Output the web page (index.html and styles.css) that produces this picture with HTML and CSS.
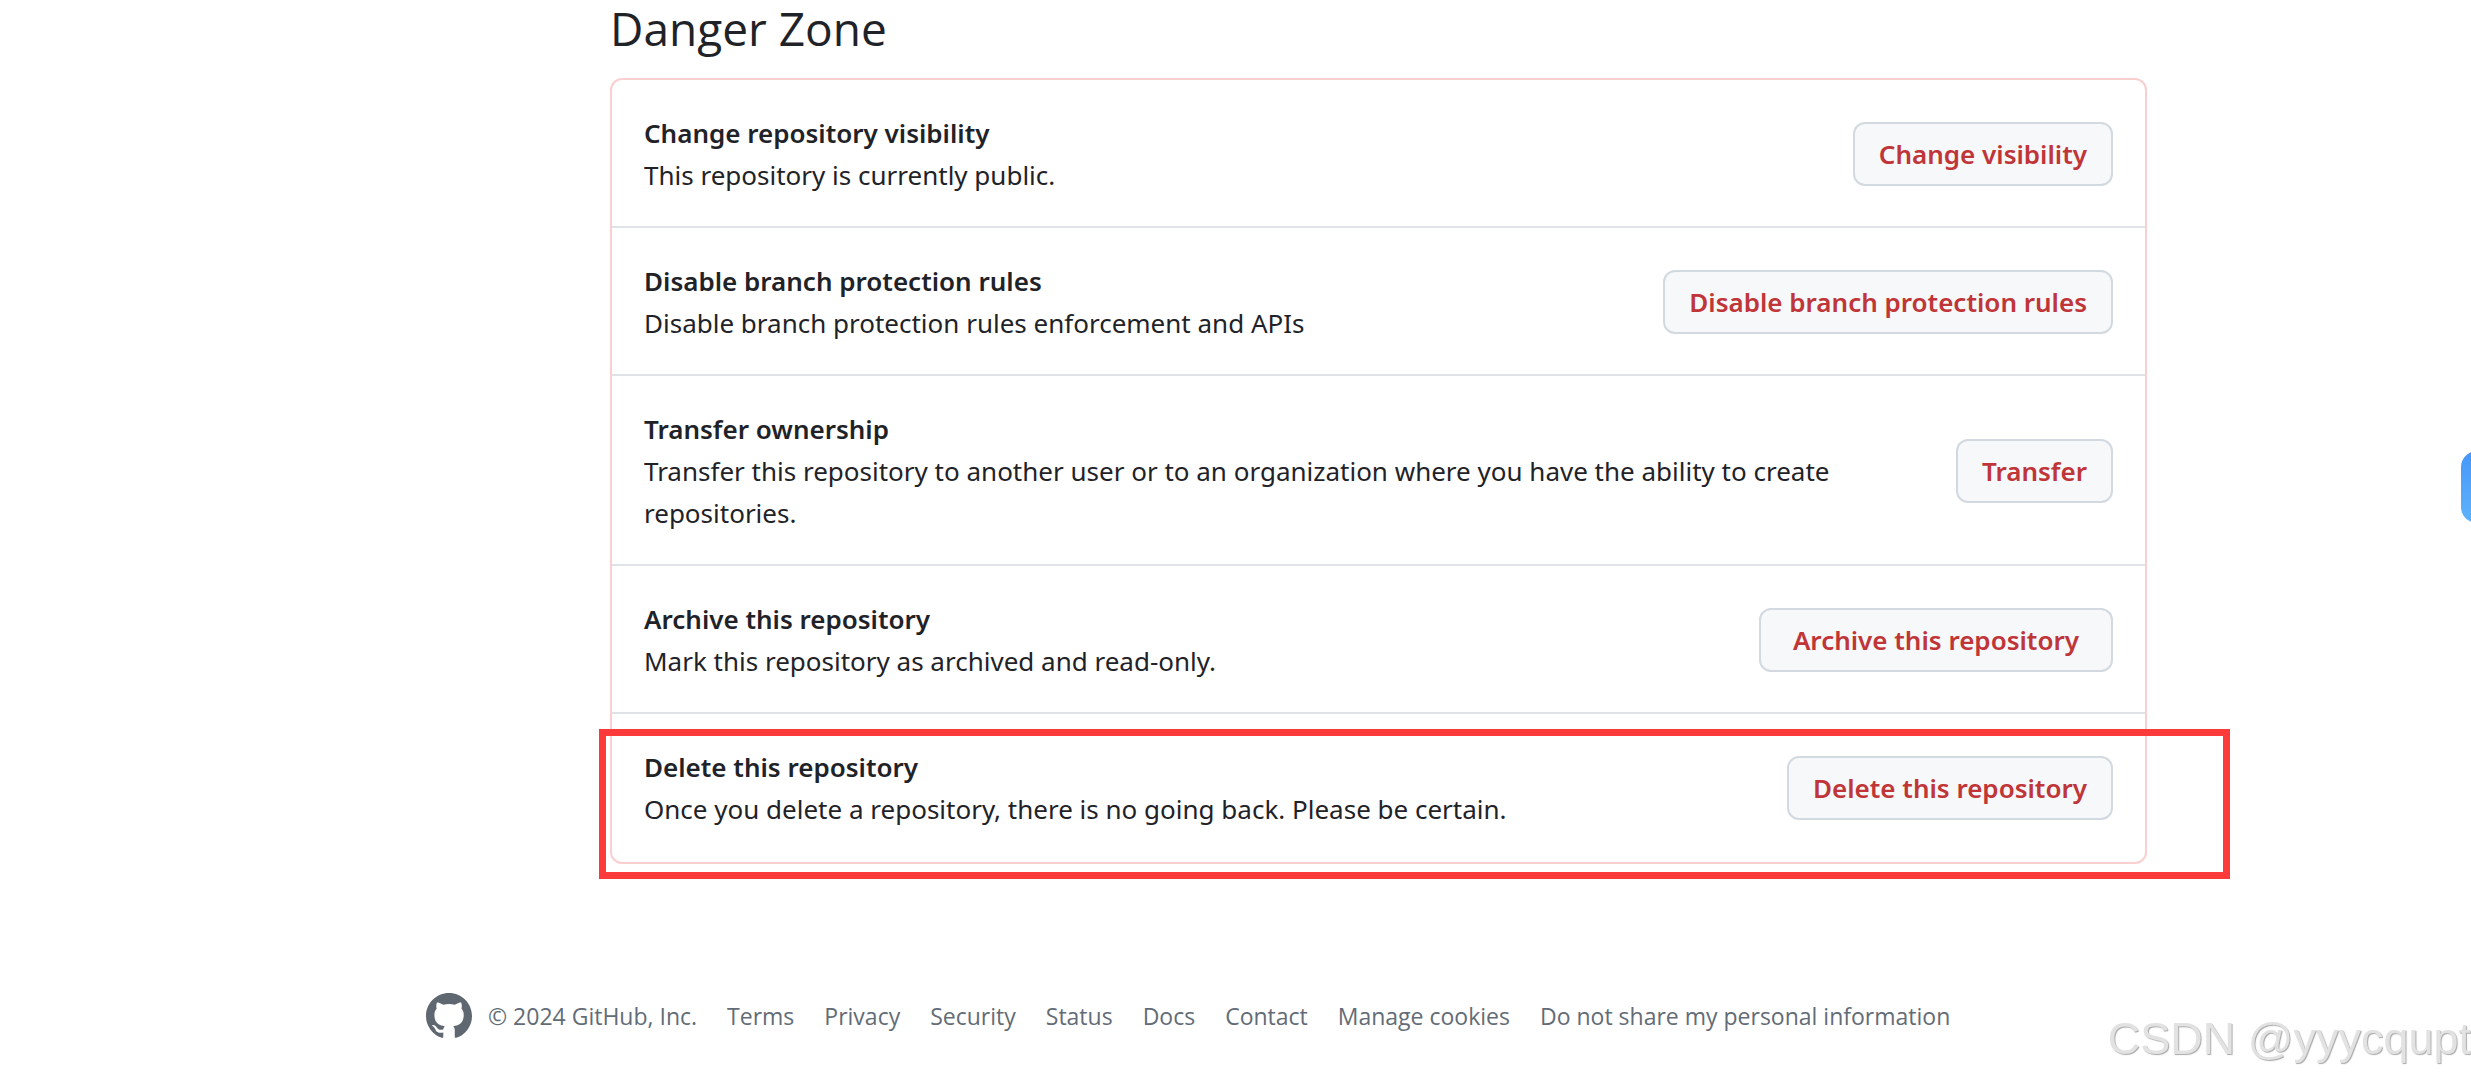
FILE: index.html
```html
<!DOCTYPE html>
<html lang="en">
<head>
<meta charset="utf-8">
<meta name="viewport" content="width=device-width, initial-scale=1">
<title>Danger Zone</title>
<link rel="stylesheet" href="styles.css">
</head>
<body>
<div class="page">
  <main class="settings">
    <h2 class="settings-title">Danger Zone</h2>
    <ul class="danger-box">
      <li class="danger-row">
        <div class="danger-text">
          <strong class="danger-name">Change repository visibility</strong>
          <p class="danger-note">This repository is currently public.</p>
        </div>
        <button type="button" class="btn">Change visibility</button>
      </li>
      <li class="danger-row">
        <div class="danger-text">
          <strong class="danger-name">Disable branch protection rules</strong>
          <p class="danger-note">Disable branch protection rules enforcement and APIs</p>
        </div>
        <button type="button" class="btn">Disable branch protection rules</button>
      </li>
      <li class="danger-row">
        <div class="danger-text">
          <strong class="danger-name">Transfer ownership</strong>
          <p class="danger-note">Transfer this repository to another user or to an organization where you have the ability to create repositories.</p>
        </div>
        <button type="button" class="btn">Transfer</button>
      </li>
      <li class="danger-row">
        <div class="danger-text">
          <strong class="danger-name">Archive this repository</strong>
          <p class="danger-note">Mark this repository as archived and read-only.</p>
        </div>
        <button type="button" class="btn btn-wide">Archive this repository</button>
      </li>
      <li class="danger-row danger-row-marked">
        <div class="danger-text">
          <strong class="danger-name">Delete this repository</strong>
          <p class="danger-note">Once you delete a repository, there is no going back. Please be certain.</p>
        </div>
        <button type="button" class="btn">Delete this repository</button>
      </li>
    </ul>
  </main>
  <footer class="footer">
    <a href="#" class="footer-logo" aria-label="GitHub">
      <svg viewBox="0 0 16 16" width="46" height="46" fill="currentColor" aria-hidden="true"><path d="M8 0c4.42 0 8 3.58 8 8a8.013 8.013 0 0 1-5.45 7.59c-.4.08-.55-.17-.55-.38 0-.27.01-1.13.01-2.2 0-.75-.25-1.23-.54-1.48 1.78-.2 3.65-.88 3.65-3.95 0-.88-.31-1.59-.82-2.15.08-.2.36-1.02-.08-2.12 0 0-.67-.22-2.2.82-.64-.18-1.32-.27-2-.27-.68 0-1.36.09-2 .27-1.53-1.03-2.2-.82-2.2-.82-.44 1.1-.16 1.92-.08 2.12-.51.56-.82 1.28-.82 2.15 0 3.06 1.86 3.75 3.64 3.95-.23.2-.44.55-.51 1.07-.46.21-1.61.55-2.33-.66-.15-.24-.6-.83-1.23-.82-.67.01-.27.38.01.53.34.19.73.9.82 1.13.16.45.68 1.31 2.69.94 0 .67.01 1.3.01 1.49 0 .21-.15.45-.55.38A7.995 7.995 0 0 1 0 8c0-4.42 3.58-8 8-8Z"/></svg>
    </a>
    <span class="footer-copy">© 2024 GitHub, Inc.</span>
    <nav class="footer-links" aria-label="Footer">
      <a href="#">Terms</a>
      <a href="#">Privacy</a>
      <a href="#">Security</a>
      <a href="#">Status</a>
      <a href="#">Docs</a>
      <a href="#">Contact</a>
      <a href="#">Manage cookies</a>
      <a href="#">Do not share my personal information</a>
    </nav>
  </footer>
</div>
<button type="button" class="side-tab" aria-label="Open side panel"></button>
<div class="watermark">CSDN @yyycqupt</div>
</body>
</html>
```
FILE: styles.css
```css
* {
  box-sizing: border-box;
}

body {
  margin: 0;
  background: #fff;
  color: #1f2328;
  font-family: "Segoe UI", "Noto Sans", "Open Sans", sans-serif;
  font-size: 26px;
  line-height: 42px;
  overflow-x: hidden;
}

.page {
  max-width: 1823px;
  margin: 0 auto;
}

.settings {
  padding-left: 286px;
}

.settings-title {
  margin: 0 0 22px;
  font-family: "Segoe UI", "Open Sans", sans-serif;
  font-size: 46px;
  font-weight: 400;
  line-height: 56px;
}

.danger-box {
  margin: 0;
  padding: 0;
  list-style: none;
  border: 2px solid #fbcfcf;
  border-radius: 12px;
}

.danger-row {
  position: relative;
  display: flex;
  align-items: center;
  justify-content: space-between;
  gap: 32px;
  padding: 32px 32px 30px;
}

.danger-row + .danger-row {
  border-top: 2px solid #dfe3e8;
}

.danger-row:last-child {
  padding-bottom: 32px;
}

.danger-text {
  max-width: 1216px;
}

.danger-name {
  display: block;
  font-weight: 600;
}

.danger-note {
  margin: 0;
}

.btn {
  flex: none;
  height: 64px;
  padding: 0 24px;
  border: 2px solid #d3d9e0;
  border-radius: 12px;
  background: #f6f8fa;
  color: #c03537;
  font: inherit;
  font-weight: 600;
}

.btn-wide {
  padding: 0 32px;
}

.danger-row-marked::after {
  content: "";
  position: absolute;
  inset: 15px -85px -17px -13px;
  border: 7px solid #fc3a3a;
  pointer-events: none;
}

.footer {
  display: flex;
  align-items: center;
  margin-top: 129px;
  padding-left: 102px;
  color: #636c76;
  font-family: "Segoe UI", "Open Sans", sans-serif;
  font-size: 23px;
}

.footer-logo {
  display: flex;
  margin-right: 16px;
  color: #5f6770;
}

.footer-copy {
  margin-right: 30px;
}

.footer-links {
  display: flex;
  gap: 30px;
}

.footer-links a {
  color: inherit;
  text-decoration: none;
}

.side-tab {
  position: fixed;
  top: 451px;
  right: -62px;
  width: 72px;
  height: 72px;
  padding: 0;
  border: 0;
  border-radius: 16px;
  background: linear-gradient(#4796f9, #5eb3fb);
}

.watermark {
  position: fixed;
  right: 0;
  bottom: 13px;
  color: #e2e2e2;
  font-family: "Liberation Sans", Arial, sans-serif;
  font-size: 45px;
  line-height: 56px;
  text-shadow: 1px 1px 1px #a8a8a8;
}
```
